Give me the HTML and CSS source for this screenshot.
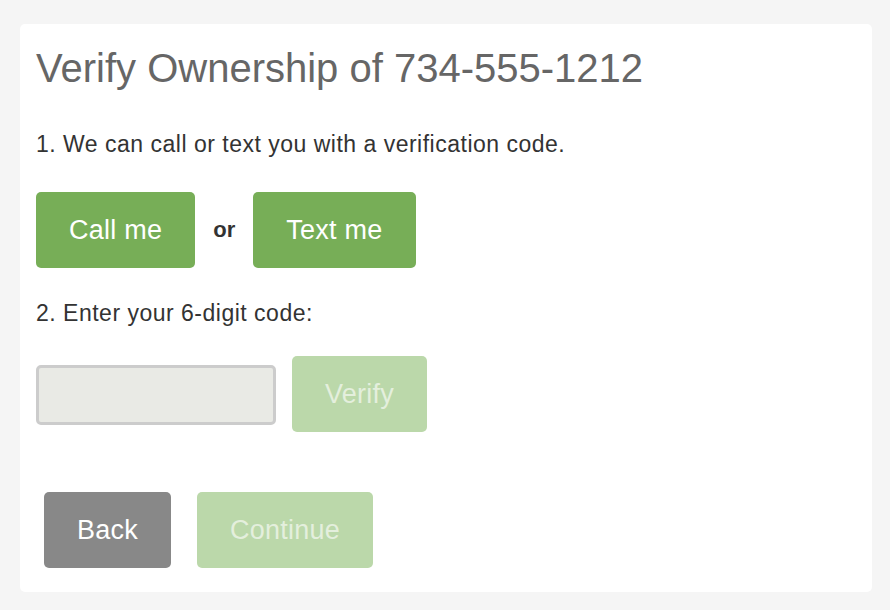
FILE: index.html
```html
<!DOCTYPE html>
<html>
<head>
<meta charset="utf-8">
<link rel="stylesheet" href="styles.css">
</head>
<body>
<div class="card">
  <h1 class="title">Verify Ownership of 734-555-1212</h1>
  <p class="step step-one">1. We can call or text you with a verification code.</p>
  <div class="choice-row">
    <button class="btn btn-green">Call me</button>
    <span class="or">or</span>
    <button class="btn btn-green">Text me</button>
  </div>
  <p class="step step-two">2. Enter your 6-digit code:</p>
  <div class="verify-row">
    <input class="code-input" type="text">
    <button class="btn btn-disabled">Verify</button>
  </div>
  <div class="nav-row">
    <button class="btn btn-gray">Back</button>
    <button class="btn btn-disabled">Continue</button>
  </div>
</div>
</body>
</html>
```
FILE: styles.css
```css
* { box-sizing: border-box; }
html, body { margin: 0; }
body {
  background: #f5f5f5;
  padding: 24px 18px 18px 20px;
  font-family: "Liberation Sans", Arial, Helvetica, sans-serif;
}
.card {
  width: 852px;
  height: 568px;
  background: #ffffff;
  border-radius: 5px;
  padding: 20px 16px 24px 16px;
}
.title {
  margin: 0;
  font-size: 40px;
  line-height: 48px;
  font-weight: normal;
  color: #666666;
}
.step {
  margin: 0;
  font-size: 23px;
  line-height: 26px;
  letter-spacing: 0.5px;
  color: #333333;
}
.step-one { margin-top: 39px; }
.step-two { margin-top: 32px; }
.choice-row {
  display: flex;
  align-items: center;
  margin-top: 35px;
}
.or {
  font-size: 22px;
  font-weight: bold;
  color: #333333;
  padding: 0 18px;
}
.btn {
  height: 76px;
  border: none;
  border-radius: 5px;
  padding: 0 33px;
  font-family: "Liberation Sans", Arial, Helvetica, sans-serif;
  font-size: 27px;
  letter-spacing: 0.25px;
  color: #ffffff;
  cursor: pointer;
}
.btn-green { background: #77ae57; }
.btn-disabled { background: #bbd8aa; color: #e4efdd; }
.btn-gray { background: #888888; }
.verify-row {
  display: flex;
  align-items: center;
  gap: 16px;
  margin-top: 30px;
}
.code-input {
  width: 240px;
  height: 60px;
  border: 3px solid #cccccc;
  border-radius: 5px;
  background: #e9eae5;
  margin-top: 2px;
  margin-bottom: 0;
}
.nav-row {
  display: flex;
  gap: 26px;
  margin-top: 60px;
  padding-left: 8px;
}
```
